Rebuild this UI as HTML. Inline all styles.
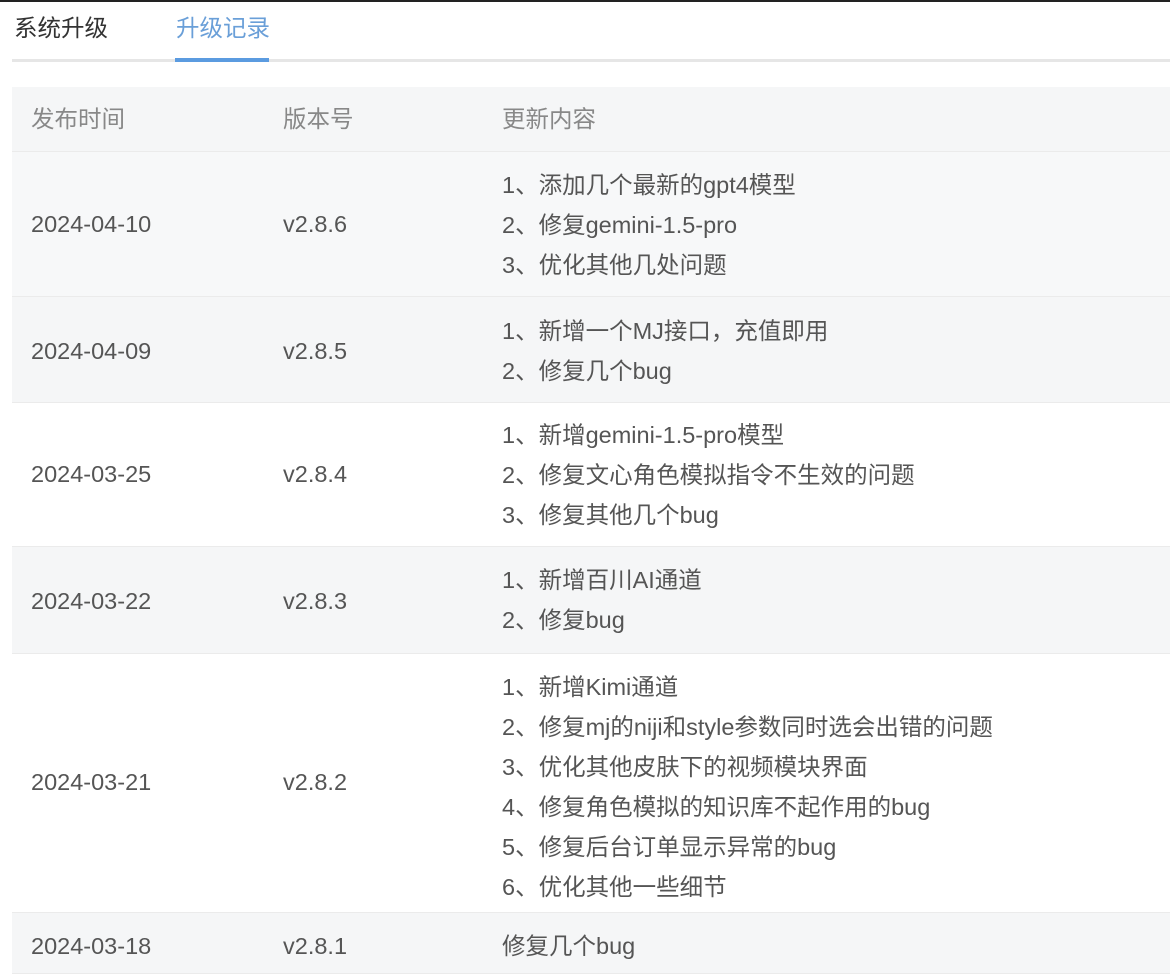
<!DOCTYPE html>
<html><head><meta charset="utf-8"><style>
*{margin:0;padding:0;box-sizing:border-box}
body{width:1170px;height:974px;overflow:hidden;background:#fff;font-family:"Liberation Sans","Noto Sans CJK SC",sans-serif;color:#555;position:relative}
.topline{position:absolute;left:0;top:0;width:1170px;height:2px;background:#222}
.tab{position:absolute;top:13px;font-size:23.5px;line-height:30px}
.t1{left:14px;color:#333}
.t2{left:176px;color:#6a9fd8}
.tabline{position:absolute;left:12px;top:59px;width:1158px;height:3px;background:#e6e6e6}
.tabact{position:absolute;left:175px;top:58px;width:94px;height:4px;background:#5b9be0}
.row{position:absolute;left:12px;width:1158px;border-bottom:1px solid #ebebeb}
.g{background:#f5f6f7}
.w{background:#fff}
.c{position:absolute;font-size:23.5px;color:#555;line-height:28px}
.c1{left:19px}.c2{left:271px}.c3{left:490px;line-height:40px}
.hd .c{color:#888;font-size:23.5px}
</style></head><body>
<div class="topline"></div>
<div class="tab t1">系统升级</div>
<div class="tab t2">升级记录</div>
<div class="tabline"></div><div class="tabact"></div>

<div class="row g hd" style="top:87px;height:65px"><div class="c c1" style="top:18px">发布时间</div><div class="c c2" style="top:18px">版本号</div><div class="c c3" style="top:12px">更新内容</div></div>

<div class="row g" style="top:152px;height:145px;background:#f7f8f9"><div class="c c1" style="top:58px">2024-04-10</div><div class="c c2" style="top:58px">v2.8.6</div><div class="c c3" style="top:13px">1、添加几个最新的gpt4模型<br>2、修复gemini-1.5-pro<br>3、优化其他几处问题</div></div>

<div class="row g" style="top:297px;height:106px"><div class="c c1" style="top:40px">2024-04-09</div><div class="c c2" style="top:40px">v2.8.5</div><div class="c c3" style="top:14px">1、新增一个MJ接口，充值即用<br>2、修复几个bug</div></div>

<div class="row w" style="top:403px;height:144px"><div class="c c1" style="top:57px">2024-03-25</div><div class="c c2" style="top:57px">v2.8.4</div><div class="c c3" style="top:12px">1、新增gemini-1.5-pro模型<br>2、修复文心角色模拟指令不生效的问题<br>3、修复其他几个bug</div></div>

<div class="row g" style="top:547px;height:107px"><div class="c c1" style="top:40px">2024-03-22</div><div class="c c2" style="top:40px">v2.8.3</div><div class="c c3" style="top:13px">1、新增百川AI通道<br>2、修复bug</div></div>

<div class="row w" style="top:654px;height:259px"><div class="c c1" style="top:114px">2024-03-21</div><div class="c c2" style="top:114px">v2.8.2</div><div class="c c3" style="top:13px">1、新增Kimi通道<br>2、修复mj的niji和style参数同时选会出错的问题<br>3、优化其他皮肤下的视频模块界面<br>4、修复角色模拟的知识库不起作用的bug<br>5、修复后台订单显示异常的bug<br>6、优化其他一些细节</div></div>

<div class="row g" style="top:913px;height:61px"><div class="c c1" style="top:19px">2024-03-18</div><div class="c c2" style="top:19px">v2.8.1</div><div class="c c3" style="top:13px">修复几个bug</div></div>
</body></html>
